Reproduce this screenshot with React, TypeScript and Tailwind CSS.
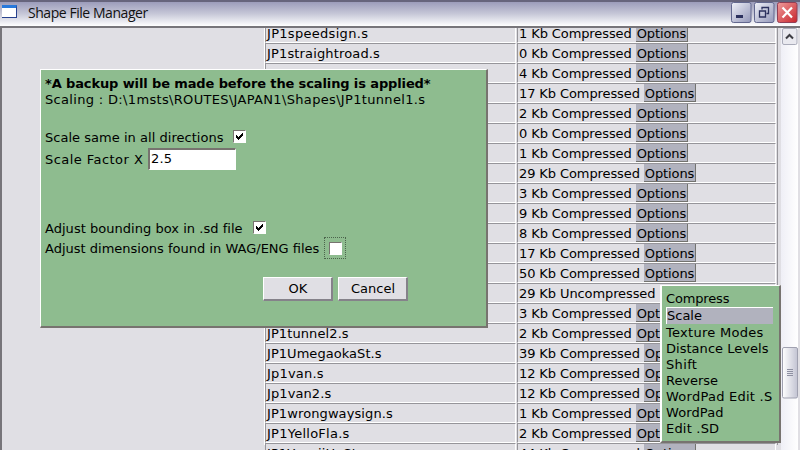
import React from "react";

type Row = [name: string, size: string, options: boolean, tracking?: string];

const rows: Row[] = [
  ["JP1speedsign.s", "1 Kb Compressed", true, "tracking-[0.3px]"],
  ["JP1straightroad.s", "0 Kb Compressed", true, "tracking-[0.15px]"],
  ["", "4 Kb Compressed", true],
  ["", "17 Kb Compressed", true],
  ["", "2 Kb Compressed", true],
  ["", "0 Kb Compressed", true],
  ["", "1 Kb Compressed", true],
  ["", "29 Kb Compressed", true],
  ["", "3 Kb Compressed", true],
  ["", "9 Kb Compressed", true],
  ["", "8 Kb Compressed", true],
  ["", "17 Kb Compressed", true],
  ["", "50 Kb Compressed", true],
  ["", "29 Kb Uncompressed", false],
  ["", "3 Kb Compressed", true],
  ["JP1tunnel2.s", "2 Kb Compressed", true, "tracking-[0.1px]"],
  ["JP1UmegaokaSt.s", "39 Kb Compressed", true, "tracking-[0.05px]"],
  ["Jp1van.s", "12 Kb Compressed", true, "tracking-[0.2px]"],
  ["Jp1van2.s", "12 Kb Compressed", true, "tracking-[0.1px]"],
  ["JP1wrongwaysign.s", "1 Kb Compressed", true, "tracking-[0.1px]"],
  ["JP1YelloFla.s", "2 Kb Compressed", true, "tracking-[0.25px]"],
  ["JP1YonojiHoSt.s", "44 Kb Compressed", true, "tracking-[0.1px]"],
];

const menu: [string, string][] = [
  ["Texture Modes", "tracking-[0.28px]"],
  ["Distance Levels", "tracking-[0.03px]"],
  ["Shift", "tracking-[0.35px]"],
  ["Reverse", "tracking-[-0.05px]"],
  ["WordPad Edit .S", "tracking-[0.25px]"],
  ["WordPad", "tracking-[0.1px]"],
  ["Edit .SD", "tracking-[0.2px]"],
];

function Check({ checked }: { checked: boolean }) {
  return (
    <span className="block h-[13px] w-[13px] shrink-0 border border-t-[#77736f] border-l-[#77736f] border-r-white border-b-white bg-white">
      {checked && (
        <svg viewBox="0 0 11 11" className="block h-[11px] w-[11px]" shapeRendering="crispEdges">
          <path d="M2 4h1v1h1v1h1v-1h1v-1h1v-1h1v-1h1v3h-1v1h-1v1h-1v1h-1v1h-1v-1h-1v-1h-1z" fill="#000" />
        </svg>
      )}
    </span>
  );
}

function TitleBar() {
  return (
    <div className="flex h-[26px] shrink-0 items-start border-t-2 border-[#66647c] bg-linear-to-b from-[#9c9cba] via-[#c7c8d8] to-white pl-[2px]">
      <span className="mt-[3px] h-[13px] w-[15px] border-t-[3px] border-r border-b border-t-[#2879dc] border-r-[#27418e] border-b-[#27418e] bg-white" />
      <span className="mt-[1px] ml-[11px] font-['Open_Sans',sans-serif] text-[14px] leading-[20px] font-medium tracking-[-0.45px] text-[#111]">Shape File Manager</span>
      <div className="ml-auto flex gap-[2px] pr-[2px]">
        <svg className="h-[22px] w-[21px]" viewBox="0 0 21 22">
          <defs>
            <linearGradient id="ctl" x1="0" y1="0" x2="1" y2="1"><stop stopColor="#f0f1f8" /><stop offset="1" stopColor="#9397b9" /></linearGradient>
            <linearGradient id="cls" x1="0" y1="0" x2="1" y2="1"><stop stopColor="#ef9c9c" /><stop offset="1" stopColor="#c8242b" /></linearGradient>
          </defs>
          <rect x=".5" y=".5" width="19.5" height="20" rx="2" fill="url(#ctl)" stroke="#62678e" />
          <path d="M5 13h7v3H5z" fill="#2c315e" />
        </svg>
        <svg className="h-[22px] w-[21px]" viewBox="0 0 21 22">
          <rect x=".5" y=".5" width="19.5" height="20" rx="2" fill="url(#ctl)" stroke="#62678e" />
          <path d="M8 7.500V5.500H14.500V11.500H12.500M5.500 9H11.500V15H5.500Z" fill="none" stroke="#2c315e" strokeWidth="1.300" />
        </svg>
        <svg className="h-[22px] w-[21px]" viewBox="0 0 21 22">
          <rect x=".5" y=".5" width="19.5" height="20" rx="2" fill="url(#cls)" stroke="#913e55" />
          <path d="M5.500 5.500L15 15.500M15 5.500L5.500 15.500" stroke="#fff" strokeWidth="2.200" />
        </svg>
      </div>
    </div>
  );
}

function FileTable() {
  return (
    <div className="h-full w-[514px] border-r border-l border-r-[#96959a] border-l-white">
      <div className="-mt-[5px] flex flex-col">
        {rows.map(([name, size, opt, tracking], i) => (
          <div key={i} className="flex h-[20px] gap-px pr-px">
            <div className="w-[251px] border border-t-[#96959a] border-r-white border-b-white border-l-[#96959a] pl-[1px] leading-[20px]">
              <span className={tracking}>{name}</span>
            </div>
            <div className="flex w-[259px] items-start gap-[4px] border border-t-[#96959a] border-r-white border-b-white border-l-[#96959a] pl-[1px] leading-[20px] tracking-[-0.1px]">
              <span>{size}</span>
              {opt && <span className="h-[18px] w-[52px] border-r border-b border-[#73736f] bg-[#b1b2be] pl-[1px]">Options</span>}
            </div>
          </div>
        ))}
      </div>
    </div>
  );
}

function ScrollBar() {
  return (
    <div className="flex h-full w-[19px] flex-col border-r-2 border-[#e0dfe4] bg-linear-to-r from-[#efeff6] to-white">
      <svg className="h-[18px] w-[17px]" viewBox="0 0 17 18">
        <rect x="1.500" y=".5" width="14.500" height="16" rx="1.500" fill="#e9e9ef" stroke="#a9abb9" />
        <path d="M5 10.500L8.500 7L12 10.500" fill="none" stroke="#3c3c42" strokeWidth="2" />
      </svg>
      <svg className="mt-[301px] h-[52px] w-[17px]" viewBox="0 0 17 52">
        <defs><linearGradient id="th"><stop stopColor="#fff" /><stop offset="1" stopColor="#c2c3d2" /></linearGradient></defs>
        <rect x="1.500" y=".5" width="15" height="50.500" rx="1.500" fill="url(#th)" stroke="#a0a1b0" />
        <path d="M6 22.500h6M6 24.500h6M6 26.500h6M6 28.500h6" stroke="#8e90a2" />
      </svg>
    </div>
  );
}

function ScaleDialog() {
  return (
    <div className="absolute top-[69px] left-[40px] flex h-[259px] w-[448px] flex-col border-t border-r-2 border-b-2 border-l border-t-white border-r-[#77736f] border-b-[#77736f] border-l-white bg-[#8ebc8f] pl-[4px]">
      <div className="mt-[6px] h-[16px] leading-[16px] font-bold tracking-[-0.12px]"><span>*A backup will be made before the scaling is applied*</span></div>
      <div className="h-[16px] leading-[16px] tracking-[0.33px]"><span>Scaling : D:\1msts\ROUTES\JAPAN1\Shapes\JP1tunnel1.s</span></div>
      <div className="mt-[22px] flex h-[16px] items-start leading-[16px]"><span className="w-[188px] tracking-[0.03px]">Scale same in all directions</span><Check checked /></div>
      <div className="mt-[2px] flex h-[22px]">
        <span className="mt-[4px] w-[103px] leading-[16px] tracking-[0.45px]">Scale Factor X</span>
        <span className="w-[88px] border-t-2 border-r border-b border-l-2 border-t-[#77736f] border-r-white border-b-white border-l-[#77736f] bg-white pl-[1px] leading-[18px] tracking-[0.2px]">2.5</span>
      </div>
      <div className="mt-[51px] flex h-[17px] items-start leading-[16px]"><span className="w-[208px] tracking-[0.03px]">Adjust bounding box in .sd file</span><Check checked /></div>
      <div className="-mt-px flex h-[22px] items-center leading-[18px]">
        <span className="mt-[2px] w-[279px]">Adjust dimensions found in WAG/ENG files</span>
        <span className="flex h-[22px] w-[22px] items-center justify-center border border-dotted border-[#4c654c]"><Check checked={false} /></span>
      </div>
      <div className="mt-[18px] ml-[218px] flex gap-[5px] text-center leading-[22px]">
        <div className="h-[24px] w-[70px] border-t border-r-2 border-b-2 border-l border-t-white border-r-[#85828a] border-b-[#85828a] border-l-white bg-[#e0dfe4] pl-[1px]">OK</div>
        <div className="h-[24px] w-[70px] border-t border-r-2 border-b-2 border-l border-t-white border-r-[#85828a] border-b-[#85828a] border-l-white bg-[#e0dfe4] pl-[1px]">Cancel</div>
      </div>
    </div>
  );
}

function OptionsMenu() {
  return (
    <div className="absolute top-[285px] left-[660px] h-[158px] w-[121px] border-t border-r-2 border-b-2 border-l-2 border-t-white border-r-[#77736f] border-b-[#77736f] border-l-white bg-[#8ebc8f] pt-[5px] pl-[4px] leading-[16px] whitespace-nowrap">
      <div className="tracking-[-0.15px]">Compress</div>
      <div className="h-[17px] w-[107px] border-t border-l border-white bg-[#b1b2be]">Scale</div>
      <div className="mt-[1px]">{menu.map(([label, tracking]) => <div key={label} className={tracking}>{label}</div>)}</div>
    </div>
  );
}

export default function App() {
  return (
    <div className="relative flex h-[450px] w-[800px] flex-col overflow-hidden bg-[#e0dfe4] font-['DejaVu_Sans',sans-serif] text-[13px] whitespace-nowrap text-black">
      <TitleBar />
      <div className="flex min-h-0 flex-1 justify-end border-t-2 border-l-2 border-[#77757a]">
        <div className="h-full overflow-hidden"><FileTable /></div>
        <div className="ml-[3px] h-full"><ScrollBar /></div>
      </div>
      <ScaleDialog />
      <OptionsMenu />
    </div>
  );
}
